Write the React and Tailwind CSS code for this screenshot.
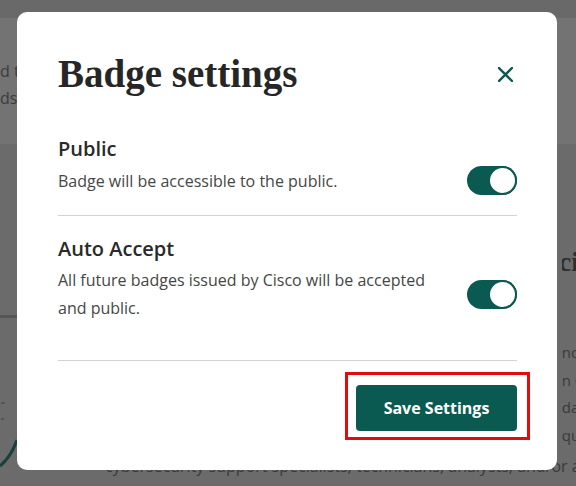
import React, { useState } from 'react';

const sans = { fontFamily: '"Open Sans", "Noto Sans", sans-serif' };

const Toggle = ({ on, onChange }) => (
    <button
        type="button"
        onClick={() => onChange(!on)}
        className={`relative flex h-[29px] w-[50px] shrink-0 items-center rounded-full transition-colors ${on ? 'justify-end bg-[#0b5a51]' : 'justify-start bg-[#bdbdbd]'}`}
    >
        <span className={`h-[29px] w-[29px] rounded-full border-[2.5px] bg-white ${on ? 'border-[#0b5a51]' : 'border-[#bdbdbd]'}`} />
    </button>
);

const SettingRow = ({ title, children, on, onChange }) => (
    <div>
        <div className="text-[20px] font-semibold leading-[28px] text-[#2a2a2a]">{title}</div>
        <div className="mt-[3px] flex items-center">
            <p className="max-w-[380px] text-[16px] leading-[28px] text-[#464646]">{children}</p>
            <div className="ml-auto">
                <Toggle on={on} onChange={onChange} />
            </div>
        </div>
    </div>
);

export default function App() {
    const [isPublic, setIsPublic] = useState(true);
    const [autoAccept, setAutoAccept] = useState(true);

    return (
        <div className="relative h-[486px] w-[576px] overflow-hidden bg-[#6b6b6b]" style={sans}>
            {/* page behind the overlay */}
            <div className="h-[18px] bg-[#696969]" />
            <div className="flex h-[126px] bg-[#737373]">
                <div className="w-[17px] overflow-hidden pt-[40px] text-[16px] leading-[27px] text-[#3c3c3c]">
                    <div className="whitespace-nowrap">d t</div>
                    <div className="whitespace-nowrap">ds</div>
                </div>
            </div>
            <div className="flex h-[342px]">
                <div className="flex w-[17px] flex-col">
                    <div className="mt-[171px] h-[3px] bg-[#565656]" />
                    <div className="mt-[84px] ml-[1px] h-[2px] w-[4px] bg-[#555]" />
                    <div className="mt-[14px] ml-[1px] h-[2px] w-[3px] bg-[#555]" />
                    <svg width="17" height="50" viewBox="0 0 17 50" className="mt-[8px]">
                        <path d="M0 38 C6 33 12 26 17 12" fill="none" stroke="#1b3f3f" strokeWidth="3" />
                    </svg>
                </div>
                <div className="flex flex-1 flex-col">
                    <div className="flex flex-1 justify-end">
                        <div className="w-[19px] overflow-hidden text-[#3a3a3a]">
                            <div className="ml-[-3px] mt-[100px] whitespace-nowrap text-[28px] font-bold leading-[36px] text-[#2e2e2e]" style={{ fontFamily: '"Liberation Serif", serif' }}>cia</div>
                            <div className="mt-[59px] text-[15px] leading-[27.5px]">
                                <div className="whitespace-nowrap">now</div>
                                <div className="whitespace-nowrap">n Ci</div>
                                <div className="whitespace-nowrap">dat</div>
                                <div className="whitespace-nowrap">qu</div>
                            </div>
                        </div>
                    </div>
                    <div className="mb-[10px] ml-[88px] whitespace-nowrap text-[16px] leading-[20px] text-[#3a3a3a]">
                        cybersecurity support specialists, technicians, analysts, and/or a
                    </div>
                </div>
            </div>

            {/* modal */}
            <div className="absolute left-[17px] top-[12px] h-[458px] w-[540px] rounded-[10px] bg-white pl-[41px] pr-[40px] pt-[39px]">
                <div className="flex items-center justify-between">
                    <h2 className="text-[39px] font-bold leading-[46px] text-[#262626]" style={{ fontFamily: '"Liberation Serif", serif' }}>
                        Badge settings
                    </h2>
                    <button type="button" className="flex h-[24px] w-[24px] items-center justify-center">
                        <svg width="15" height="15" viewBox="0 0 15 15">
                            <path d="M1 1 L14 14 M14 1 L1 14" stroke="#0b5a51" strokeWidth="2.4" strokeLinecap="square" />
                        </svg>
                    </button>
                </div>

                <div className="mt-[38px] border-b border-[#d2d2d2] pb-[20px]">
                    <SettingRow title="Public" on={isPublic} onChange={setIsPublic}>
                        Badge will be accessible to the public.
                    </SettingRow>
                </div>

                <div className="border-b border-[#d2d2d2] pb-[38px] pt-[19px]">
                    <SettingRow title="Auto Accept" on={autoAccept} onChange={setAutoAccept}>
                        All future badges issued by Cisco will be accepted and public.
                    </SettingRow>
                </div>

                <div className="mt-[24px] flex justify-end">
                    <div className="relative">
                        <div className="absolute bottom-[-9px] left-[-11px] right-[-13px] top-[-13px] border-[3px] border-[#e00d0d]" />
                        <button type="button" className="relative h-[46px] w-[161px] rounded-[4px] bg-[#0b5a51] text-[16px] font-bold text-white">
                            Save Settings
                        </button>
                    </div>
                </div>
            </div>
        </div>
    );
}
